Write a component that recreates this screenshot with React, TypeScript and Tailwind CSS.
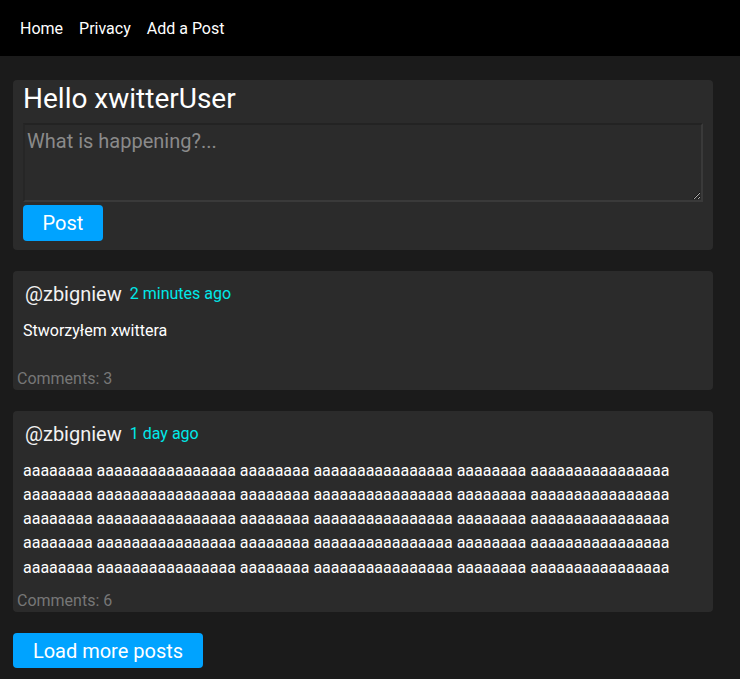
import React from "react";

const posts = [
  {
    id: 1,
    author: "zbigniew",
    time: "2 minutes ago",
    body: "Stworzyłem xwittera",
    comments: 3,
  },
  {
    id: 2,
    author: "zbigniew",
    time: "1 day ago",
    body: Array(15).fill("aaaaaaaa aaaaaaaaaaaaaaaa").join(" "),
    comments: 6,
  },
];

const PostCard = ({ post }: { post: (typeof posts)[number] }) => (
  <div className="mb-[21px] flex w-[700px] flex-col rounded bg-[#2b2b2b] pt-[7px]">
    {/* header */}
    <div className="flex h-[31px] items-center pl-3 pt-[1px]">
      <span className="text-[20px] leading-[28px] text-[#f2f2f2]">@{post.author}</span>
      <span className="ml-2 text-[16px] leading-6 text-[#00e8e8]">{post.time}</span>
    </div>
    {/* body */}
    <p className="mt-[10px] min-h-[49px] break-words px-[10px] pb-[10px] text-[16px] leading-[24.3px] text-white">
      {post.body}
    </p>
    <div className="pl-1 text-[16px] leading-[22px] text-[#777777]">Comments: {post.comments}</div>
  </div>
);

export default function App() {
  return (
    <div className="min-h-[679px] bg-[#1b1b1b] font-['Roboto',sans-serif]">
      {/* navbar */}
      <nav className="flex h-14 items-center bg-black px-3 pt-[2px]">
        {["Home", "Privacy", "Add a Post"].map((item) => (
          <a key={item} href="#" className="px-2 text-[16px] leading-6 text-white">
            {item}
          </a>
        ))}
      </nav>

      <main className="px-[13px] pt-6 pb-3">
        {/* new post form */}
        <div className="mb-[21px] flex w-[700px] flex-col rounded bg-[#2b2b2b] px-[10px] pt-[2px] pb-[9px]">
          <h3 className="text-[28px] leading-[1.2] text-white">Hello xwitterUser</h3>
          <textarea
            placeholder="What is happening?..."
            className="mt-[7px] h-[79px] w-[680px] border-2 border-t-[#232323] border-l-[#262626] border-r-[#3a3a3a] border-b-[#3a3a3a] bg-[#2b2b2b] px-[2px] py-[1px] text-[20px] leading-[30px] text-white outline-none placeholder:text-[#8a8a8a]"
          />
          <button
            type="button"
            className="mt-[3px] h-9 w-20 rounded bg-[#00a3ff] text-[20px] leading-[30px] text-white"
          >
            Post
          </button>
        </div>

        {posts.map((post) => (
          <PostCard key={post.id} post={post} />
        ))}

        <button
          type="button"
          className="h-[35px] w-[190px] rounded bg-[#00a3ff] text-[20px] leading-[30px] text-white"
        >
          Load more posts
        </button>
      </main>
    </div>
  );
}
